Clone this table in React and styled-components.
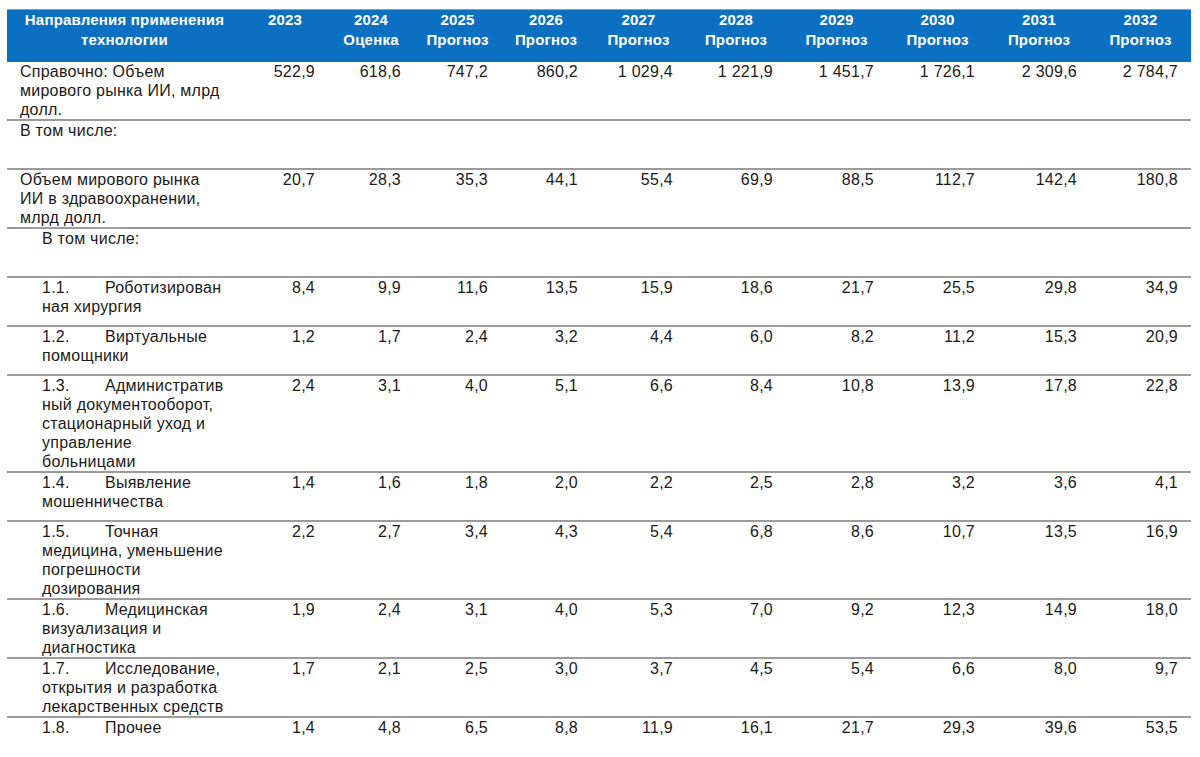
import React from 'react';
import styled, { createGlobalStyle } from 'styled-components';

const columns = '235px 86px 86px 87px 90px 95px 100px 101px 101px 102px 101px';

const years = [
  ['2023', ''],
  ['2024', 'Оценка'],
  ['2025', 'Прогноз'],
  ['2026', 'Прогноз'],
  ['2027', 'Прогноз'],
  ['2028', 'Прогноз'],
  ['2029', 'Прогноз'],
  ['2030', 'Прогноз'],
  ['2031', 'Прогноз'],
  ['2032', 'Прогноз'],
];

const rows = [
  {
    lines: ['Справочно: Объем', 'мирового рынка ИИ, млрд', 'долл.'],
    values: ['522,9', '618,6', '747,2', '860,2', '1 029,4', '1 221,9', '1 451,7', '1 726,1', '2 309,6', '2 784,7'],
  },
  { lines: ['В том числе:'] },
  {
    lines: ['Объем мирового рынка', 'ИИ в здравоохранении,', 'млрд долл.'],
    values: ['20,7', '28,3', '35,3', '44,1', '55,4', '69,9', '88,5', '112,7', '142,4', '180,8'],
  },
  { lines: ['В том числе:'], indent: true },
  {
    num: '1.1.',
    lines: ['Роботизирован', 'ная хирургия'],
    values: ['8,4', '9,9', '11,6', '13,5', '15,9', '18,6', '21,7', '25,5', '29,8', '34,9'],
  },
  {
    num: '1.2.',
    lines: ['Виртуальные', 'помощники'],
    values: ['1,2', '1,7', '2,4', '3,2', '4,4', '6,0', '8,2', '11,2', '15,3', '20,9'],
  },
  {
    num: '1.3.',
    lines: ['Административ', 'ный документооборот,', 'стационарный уход и', 'управление', 'больницами'],
    values: ['2,4', '3,1', '4,0', '5,1', '6,6', '8,4', '10,8', '13,9', '17,8', '22,8'],
  },
  {
    num: '1.4.',
    lines: ['Выявление', 'мошенничества'],
    values: ['1,4', '1,6', '1,8', '2,0', '2,2', '2,5', '2,8', '3,2', '3,6', '4,1'],
  },
  {
    num: '1.5.',
    lines: ['Точная', 'медицина, уменьшение', 'погрешности', 'дозирования'],
    values: ['2,2', '2,7', '3,4', '4,3', '5,4', '6,8', '8,6', '10,7', '13,5', '16,9'],
  },
  {
    num: '1.6.',
    lines: ['Медицинская', 'визуализация и', 'диагностика'],
    values: ['1,9', '2,4', '3,1', '4,0', '5,3', '7,0', '9,2', '12,3', '14,9', '18,0'],
  },
  {
    num: '1.7.',
    lines: ['Исследование,', 'открытия и разработка', 'лекарственных средств'],
    values: ['1,7', '2,1', '2,5', '3,0', '3,7', '4,5', '5,4', '6,6', '8,0', '9,7'],
  },
  {
    num: '1.8.',
    lines: ['Прочее'],
    values: ['1,4', '4,8', '6,5', '8,8', '11,9', '16,1', '21,7', '29,3', '39,6', '53,5'],
    last: true,
  },
];

const App = () => (
  <>
    <GlobalStyle />
    <Table>
      <HeaderRow>
        <HeadCell>
          Направления применения
          <br />
          технологии
        </HeadCell>
        {years.map(([year, note]) => (
          <HeadCell key={year}>
            {year}
            {note && <br />}
            {note}
          </HeadCell>
        ))}
      </HeaderRow>
      {rows.map((row, i) => (
        <Row key={i} $last={row.last}>
          <LabelCell $indent={row.indent || !!row.num}>
            {row.lines.map((line, j) => (
              <Line key={j}>
                {j === 0 && row.num && <Num>{row.num}</Num>}
                {line}
              </Line>
            ))}
          </LabelCell>
          {(row.values || years.map(() => '')).map((v, j) => (
            <ValueCell key={j}>{v}</ValueCell>
          ))}
        </Row>
      ))}
    </Table>
  </>
);

const GlobalStyle = createGlobalStyle`
  body {
    margin: 0;
    background: #ffffff;
    font-family: "Liberation Sans", Arial, sans-serif;
  }
`;

const Table = styled.div`
  margin: 9px 0 0 7px;
  width: 1184px;
  font-size: 16px;
  letter-spacing: 0.25px;
  color: #1a1a1a;
`;

const HeaderRow = styled.div`
  display: grid;
  grid-template-columns: ${columns};
  height: 52px;
  border-top: 1px solid #9a9a9a;
  background: #0b70c2;
`;

const HeadCell = styled.div`
  text-align: center;
  color: #ffffff;
  font-weight: bold;
  font-size: 15px;
  letter-spacing: 0.2px;
  line-height: 19.5px;
`;

const Row = styled.div`
  display: grid;
  grid-template-columns: ${columns};
  min-height: 47px;
  border-bottom: ${({ $last }) => ($last ? 'none' : '2px solid #9b9b9b')};
  line-height: 19px;
`;

const LabelCell = styled.div`
  padding-left: ${({ $indent }) => ($indent ? '35px' : '13px')};
`;

const Line = styled.div`
  white-space: nowrap;
`;

const Num = styled.span`
  display: inline-block;
  width: 63px;
`;

const ValueCell = styled.div`
  text-align: right;
  padding-right: 13px;
`;

export default App;
